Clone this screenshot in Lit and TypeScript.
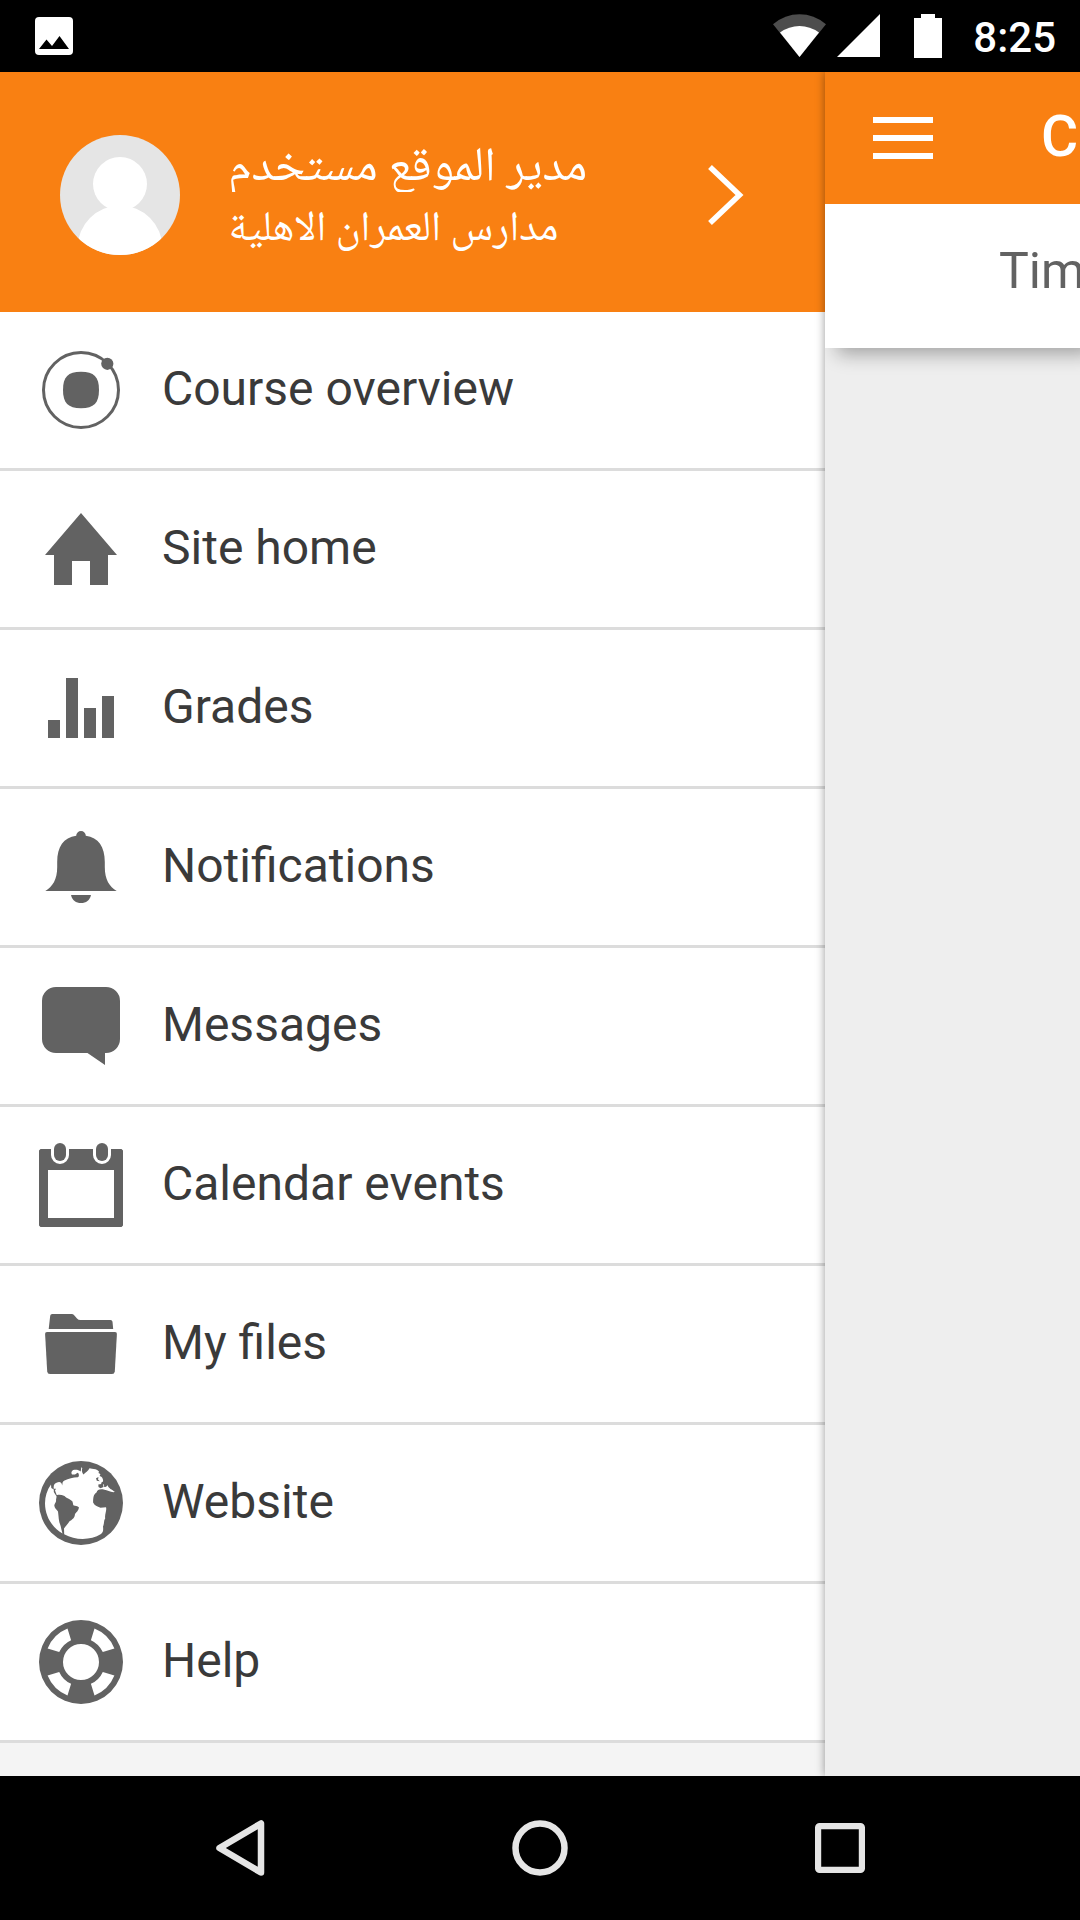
import { LitElement, html, svg, css } from "lit";
import { customElement, property } from "lit/decorators.js";

const ICONS: Record<string, unknown> = {
  overview: svg`
    <circle cx="42" cy="42" r="37.5" fill="none" stroke="currentColor" stroke-width="3"/>
    <circle cx="68.3" cy="15.8" r="6.1"/>
    <path d="M42 23.8C55 23.8 60 29 60 42S55 60.2 42 60.2 24 55 24 42 29 23.8 42 23.8Z"/>`,
  home: svg`<path d="M42 6 78 48H69V78H51V54H33V78H15V48H6Z"/>`,
  grades: svg`<path d="M9 54H21V72H9ZM27 12H39V72H27ZM45 42H57V72H45ZM63 30H75V72H63Z"/>`,
  bell: svg`
    <path d="M6.3 66C13.5 61.5 18.2 55 18.2 42V37C18.2 22 24.5 12.5 37.2 10.8A4.8 4.8 0 0 1 46.8 10.8C59.5 12.5 65.8 22 65.8 37V42C65.8 55 70.5 61.5 77.7 66Z"/>
    <path d="M32 70H52C50.8 75.5 47 78 42 78S33.200 75.500 32 70Z"/>`,
  chat: svg`<path d="M17 3H67A14 14 0 0 1 81 17V55A14 14 0 0 1 67 69H66V81L48.500 69H17A14 14 0 0 1 3 55V17A14 14 0 0 1 17 3Z"/>`,
  calendar: svg`
    <path fill-rule="evenodd" d="M1.500 6H12V12A9 9 0 0 0 30 12V6H54V12A9 9 0 0 0 72 12V6H82.500L84 7.500V82.500L82.500 84H1.500L0 82.500V7.500ZM9 27V75H75V27Z"/>
    <rect x="15" y="0" width="12" height="18" rx="6"/>
    <rect x="57" y="0" width="12" height="18" rx="6"/>`,
  folder: svg`
    <path d="M11.200 13.800Q11.400 12 13.200 12H32.500Q34.200 12 35.400 13.400L38 16.400Q39.300 18 41.500 18H71.500Q73.300 18 73.500 19.800L74.200 27H9.700Z"/>
    <path d="M8 30H76Q78 30 77.900 32L75.800 69.500Q75.500 72 73 72H11Q8.500 72 8.200 69.500L6.100 32Q6 30 8 30Z"/>`,
  globe: svg`
    <circle cx="42" cy="42" r="42"/>
    <g fill="#fff">
      <path d="M12 23.500C8 29 6 35.500 6 42.500C6.200 55 12.500 66 23.500 72.500C22.500 69 22 66.500 21.500 64.500C19.500 60 19.800 56 19 50.500C17.500 48.500 15.500 47 15.300 44.500C15.500 42 17.500 41 17 39L17.600 35.500L14.800 31V28.500L12.300 27Z"/>
      <path d="M17.800 34.200L16 29.500L17 27.800H14.700C14.500 24.500 15 22.800 17.500 21.800C20 20.500 22.500 20.500 23.200 24.500C23.800 22 23 20.800 25.500 19.500C29.500 17.500 34 16.200 38.800 16.200C40.500 15.500 40 12 38.500 11.800L36 13.500H33C31.500 11.500 33 9 35.500 8.800C38 8.500 40 9.200 41.700 10.500L42.300 6.200L43.300 7C42.500 9.500 43 11.500 44.500 13.500C46.500 11.500 49 10.500 50.500 7.300L53 7.800C55.500 8.200 57.500 8 60 10.500L59.500 12C62 13 61.500 13.500 60.500 15C63 15.500 64.500 18 64 20.500C62.500 21.500 61.500 22 62.500 23L65 23.500L65.200 26C67 26 68 25.500 68.500 24C69.500 27.500 73 28.500 76 31C72 31.800 68.500 29 65.500 28.700C61 27.500 58.500 28.500 57.500 31.500C54.500 33.500 54.200 36 54.100 41.500C55.500 44.500 58 45.500 61.500 46.700L67 46.300C68 49.500 65.500 53 66.200 57.500C64.500 59.500 65.500 62.500 64 65.500C64.500 69.500 64 71.500 62 73C51.500 79.500 36.500 79.500 25.200 73.200L25 67.500C26.500 65 29.500 62.500 30.500 60.300C36 57 35.500 55.500 36 53C37.500 51 39.500 49.500 40 46.500C38.500 45 36.500 45 34.300 44.300L33.500 40.500C30.500 37.500 27.500 37.500 25.500 35C22.500 33.800 20 33.500 17.800 34.200Z"/>
    </g>
    <path d="M57 17.200L59.500 16L59 18.500L60.800 20.300L57.800 19.700ZM59.300 23.500L64 22.800L64.500 26L61.500 27.300L59.500 26Z"/>`,
  help: svg`<path fill-rule="evenodd" d="M42 0A42 42 0 1 1 42 84A42 42 0 1 1 42 0ZM42 24A18 18 0 1 0 42 60A18 18 0 1 0 42 24Z"/>
    <g fill="#fff">
      ${[0, 90, 180, 270].map(
        (a) => svg`<path transform="rotate(${a} 42 42)" d="M28.500 8.600A36 36 0 0 0 8.600 28.500L20.200 32.100A24 24 0 0 1 32.100 20.200Z"/>`
      )}
    </g>`,
};

const ITEMS = [
  { icon: "overview", label: "Course overview" },
  { icon: "home", label: "Site home" },
  { icon: "grades", label: "Grades" },
  { icon: "bell", label: "Notifications" },
  { icon: "chat", label: "Messages" },
  { icon: "calendar", label: "Calendar events" },
  { icon: "folder", label: "My files" },
  { icon: "globe", label: "Website" },
  { icon: "help", label: "Help" },
];

@customElement("status-bar")
class StatusBar extends LitElement {
  static styles = css`
    :host { display: flex; align-items: center; height: 72px; box-sizing: border-box; padding: 0 24px 0 35px; background: #000; color: #fff; }
    svg { display: block; flex: none; }
    .tray { display: flex; align-items: center; margin-left: auto; }
    .clock { margin-left: 30px; font: 500 42px/72px Roboto, sans-serif; padding-top: 2px; height: 70px; }
  `;
  render() {
    return html`
      <svg width="38" height="38" viewBox="0 0 38 38">
        <rect width="38" height="38" rx="4" fill="#fff"/>
        <path d="M4 32 11.500 22.500 17 29 24.500 19 34 32Z" fill="#000"/>
      </svg>
      <div class="tray">
        <svg width="170" height="44" viewBox="773 14 170 44">
          <path d="M773 24.200Q785 14.300 799.500 14.300T826 24.200L799.500 57Z" fill="#4d4d4d"/>
          <path d="M780 32.500Q789 26 799.500 26T819 32.500L799.500 57Z" fill="#fff"/>
          <path d="M837 57 880 14V57ZM921 14H935V18H942V58H914V18H921Z" fill="#fff"/>
        </svg>
        <span class="clock">8:25</span>
      </div>`;
  }
}

@customElement("menu-item")
class MenuItem extends LitElement {
  @property() icon = "";
  @property() label = "";
  static styles = css`
    :host { display: flex; align-items: center; height: 156px; padding-left: 39px; background: #fff; border-bottom: 3px solid #dcdcdc; }
    .icon { display: block; width: 84px; height: 84px; flex: none; color: #626262; fill: currentColor; }
    .label { margin-left: 39px; padding-bottom: 3px; font: 400 48px/60px Roboto, sans-serif; color: #3a3a3a; white-space: nowrap; }
  `;
  render() {
    return html`<svg class="icon" viewBox="0 0 84 84">${ICONS[this.icon]}</svg>
      <span class="label">${this.label}</span>`;
  }
}

@customElement("app-root")
class AppRoot extends LitElement {
  static styles = css`
    :host { display: flex; flex-direction: column; width: 1080px; height: 1920px; overflow: hidden; font-family: Roboto, sans-serif; background: #000; }
    .body { display: grid; grid-template-columns: 825px 255px; height: 1704px; overflow: hidden; }
    .drawer { background: #f4f4f4; }
    .profile { display: flex; align-items: center; height: 240px; box-sizing: border-box; padding: 6px 81px 0 60px; background: #f98012; color: #fff; }
    .avatar { flex: none; display: block; width: 120px; height: 120px; }
    .names { margin-left: 48px; white-space: nowrap; font-family: "Noto Naskh Arabic UI", "Noto Naskh Arabic", "DejaVu Sans", sans-serif; }
    .name { height: 63px; overflow: hidden; font-size: 48.200px; line-height: 78px; }
    .site { height: 69px; font-size: 42.100px; line-height: 75px; }
    .chevron { display: block; margin-left: auto; }
    .page { background: #eee; box-shadow: 0 0 9px rgba(0, 0, 0, 0.4); overflow: hidden; }
    .bar { position: relative; z-index: 1; display: flex; align-items: center; height: 132px; background: #f98012; color: #fff; padding-left: 48px; }
    .burger { flex: none; display: grid; gap: 12px; width: 60px; }
    .burger i { display: block; height: 6px; background: #fff; }
    .title { margin-left: 108px; font-size: 57px; font-weight: 500; line-height: 72px; white-space: nowrap; padding-bottom: 3px; }
    .tabs { height: 144px; box-sizing: border-box; padding: 37px 0 0 174px; background: #fff; color: #626262; box-shadow: 12px 6px 18px rgba(0, 0, 0, 0.32); font-size: 50px; line-height: 60px; white-space: nowrap; }
    .nav { display: grid; grid-template-columns: repeat(3, 300px); justify-content: center; align-items: center; justify-items: center; height: 144px; background: #000; }
  `;
  render() {
    return html`
      <status-bar></status-bar>
      <div class="body">
        <nav class="drawer">
          <header class="profile">
            <svg class="avatar" viewBox="0 0 120 120">
              <clipPath id="round"><circle cx="60" cy="60" r="60"/></clipPath>
              <g clip-path="url(#round)">
                <rect width="120" height="120" fill="#e5e5e5"/>
                <circle cx="60" cy="49" r="27" fill="#fff"/>
                <circle cx="60" cy="113" r="42.500" fill="#fff"/>
              </g>
            </svg>
            <div class="names">
              <div class="name">مدير الموقع مستخدم</div>
              <div class="site">مدارس العمران الاهلية</div>
            </div>
            <svg class="chevron" width="36" height="60" viewBox="0 0 36 60">
              <path d="M2 2 31.500 30 2 58" fill="none" stroke="#fff" stroke-width="5.500"/>
            </svg>
          </header>
          ${ITEMS.map((i) => html`<menu-item .icon=${i.icon} .label=${i.label}></menu-item>`)}
        </nav>
        <main class="page">
          <div class="bar">
            <div class="burger"><i></i><i></i><i></i></div>
            <div class="title">Course overview</div>
          </div>
          <div class="tabs">Timeline</div>
        </main>
      </div>
      <div class="nav">
        <svg width="54" height="60" viewBox="213 1818 54 60"><path d="M219.500 1848 261 1823.500V1872.500Z" fill="none" stroke="#e5e5e5" stroke-width="6.500" stroke-linejoin="round"/></svg>
        <svg width="60" height="60" viewBox="0 0 60 60"><circle cx="30" cy="30" r="24.500" fill="none" stroke="#e5e5e5" stroke-width="6.500"/></svg>
        <svg width="50" height="50" viewBox="0 0 50 50"><rect x="3.100" y="3.100" width="43.800" height="43.800" rx="1.500" fill="none" stroke="#e5e5e5" stroke-width="6.200"/></svg>
      </div>`;
  }
}
